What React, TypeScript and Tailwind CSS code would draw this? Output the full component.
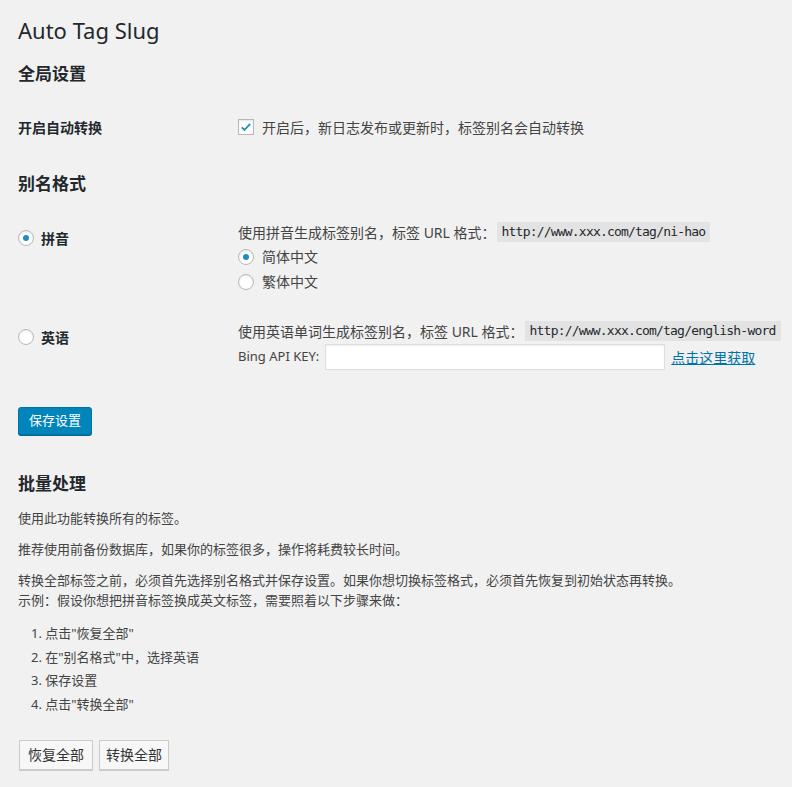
import React from 'react';

const font = "font-['Segoe_UI','Noto_Sans','Noto_Sans_CJK_SC',sans-serif]";

function Check() {
  return (
    <span className="w-4 h-4 border border-[#b4b9be] bg-white shadow-[inset_0_1px_2px_rgba(0,0,0,0.1)] flex items-center justify-center shrink-0">
      <svg width="14" height="14" viewBox="0 0 20 20">
        <path d="M4 10.5l3.8 3.8L16 5.5" fill="none" stroke="#1e8cbe" strokeWidth="2.6" />
      </svg>
    </span>
  );
}

function Radio({ on }: { on?: boolean }) {
  return (
    <span className="w-4 h-4 rounded-full border border-[#b4b9be] bg-white shadow-[inset_0_1px_2px_rgba(0,0,0,0.1)] flex items-center justify-center shrink-0">
      {on && <span className="w-1.5 h-1.5 rounded-full bg-[#1e8cbe]" />}
    </span>
  );
}

function Code({ children }: { children: React.ReactNode }) {
  return (
    <code className="shrink-0 whitespace-nowrap bg-[#e3e3e3] ml-px px-[5px] py-[2px] text-[13px] leading-[16px] text-[#23282d] font-['DejaVu_Sans_Mono',monospace] tracking-[-0.8px]">
      {children}
    </code>
  );
}

export default function App() {
  return (
    <div className={`min-h-[787px] bg-[#f1f1f1] text-[#444] text-[13px] ${font} pl-[18px] overflow-hidden`}>
      <h1 className="text-[22px] font-normal text-[#23282d] pt-[16px] leading-[29px]">Auto Tag Slug</h1>

      <h2 className="text-[17px] font-bold text-[#23282d] mt-[17px] leading-[24px]">全局设置</h2>

      <div className="flex mt-[31px] h-[20px] items-center">
        <div className="w-[220px] shrink-0 text-[14px] font-bold text-[#23282d]">开启自动转换</div>
        <label className="flex items-center gap-2 text-[14px] text-[#444]">
          <Check />
          <span>开启后，新日志发布或更新时，标签别名会自动转换</span>
        </label>
      </div>

      <h2 className="text-[17px] font-bold text-[#23282d] mt-[35px] leading-[24px]">别名格式</h2>

      <div className="flex mt-[26px] text-[14px]">
        <div className="w-[220px] shrink-0 flex items-center gap-[7px] h-[20px] mt-[6px] font-bold text-[#23282d]">
          <Radio on />
          <span>拼音</span>
        </div>
        <div className="flex flex-col">
          <div className="flex items-center h-[20px] whitespace-nowrap">
            <span>使用拼音生成标签别名，标签 URL 格式：</span>
            <Code>http://www.xxx.com/tag/ni-hao</Code>
          </div>
          <div className="flex items-center gap-2 h-[25px] mt-[2px]">
            <Radio on />
            <span>简体中文</span>
          </div>
          <div className="flex items-center gap-2 h-[25px]">
            <Radio />
            <span>繁体中文</span>
          </div>
        </div>
      </div>

      <div className="flex mt-[27px] text-[14px]">
        <div className="w-[220px] shrink-0 flex items-center gap-[7px] h-[20px] mt-[6px] font-bold text-[#23282d]">
          <Radio />
          <span>英语</span>
        </div>
        <div className="flex flex-col">
          <div className="flex items-center h-[20px] whitespace-nowrap">
            <span>使用英语单词生成标签别名，标签 URL 格式：</span>
            <Code>http://www.xxx.com/tag/english-word</Code>
          </div>
          <div className="flex items-center h-[26px] mt-[3px] whitespace-nowrap">
            <span className="text-[13px]">Bing API KEY:</span>
            <input className="ml-[6px] w-[340px] h-[26px] bg-white border border-[#ddd] shadow-[inset_0_1px_2px_rgba(0,0,0,0.07)]" />
            <a href="#" className="ml-[6px] text-[#0073aa] underline">点击这里获取</a>
          </div>
        </div>
      </div>

      <button className="mt-[37px] h-[28px] px-[10px] bg-[#0085ba] border border-[#0073aa] rounded-[3px] text-white text-[13px] shadow-[0_1px_0_#006799]">
        保存设置
      </button>

      <h2 className="text-[17px] font-bold text-[#23282d] mt-[37px] leading-[24px]">批量处理</h2>

      <p className="mt-[12px] leading-[20px]">使用此功能转换所有的标签。</p>
      <p className="mt-[11px] leading-[20px]">推荐使用前备份数据库，如果你的标签很多，操作将耗费较长时间。</p>
      <p className="mt-[11px] leading-[20px]">
        转换全部标签之前，必须首先选择别名格式并保存设置。如果你想切换标签格式，必须首先恢复到初始状态再转换。
        <br />
        示例：假设你想把拼音标签换成英文标签，需要照着以下步骤来做：
      </p>

      <ol className="mt-[13px] ml-[13px] list-decimal list-inside">
        <li className="leading-[20px] mb-[3.5px]">点击"恢复全部"</li>
        <li className="leading-[20px] mb-[3.5px]">在"别名格式"中，选择英语</li>
        <li className="leading-[20px] mb-[3.5px]">保存设置</li>
        <li className="leading-[20px] mb-[3.5px]">点击"转换全部"</li>
      </ol>

      <div className="flex gap-[6px] mt-[26px] pl-px">
        <button className="h-[30px] px-[8px] bg-[#f7f7f7] border border-[#ccc] text-[#333] shadow-[0_1px_0_#ccc] text-[14px]">恢复全部</button>
        <button className="h-[30px] px-[6px] bg-[#f7f7f7] border border-[#ccc] text-[#333] shadow-[0_1px_0_#ccc] text-[14px]">转换全部</button>
      </div>
    </div>
  );
}
